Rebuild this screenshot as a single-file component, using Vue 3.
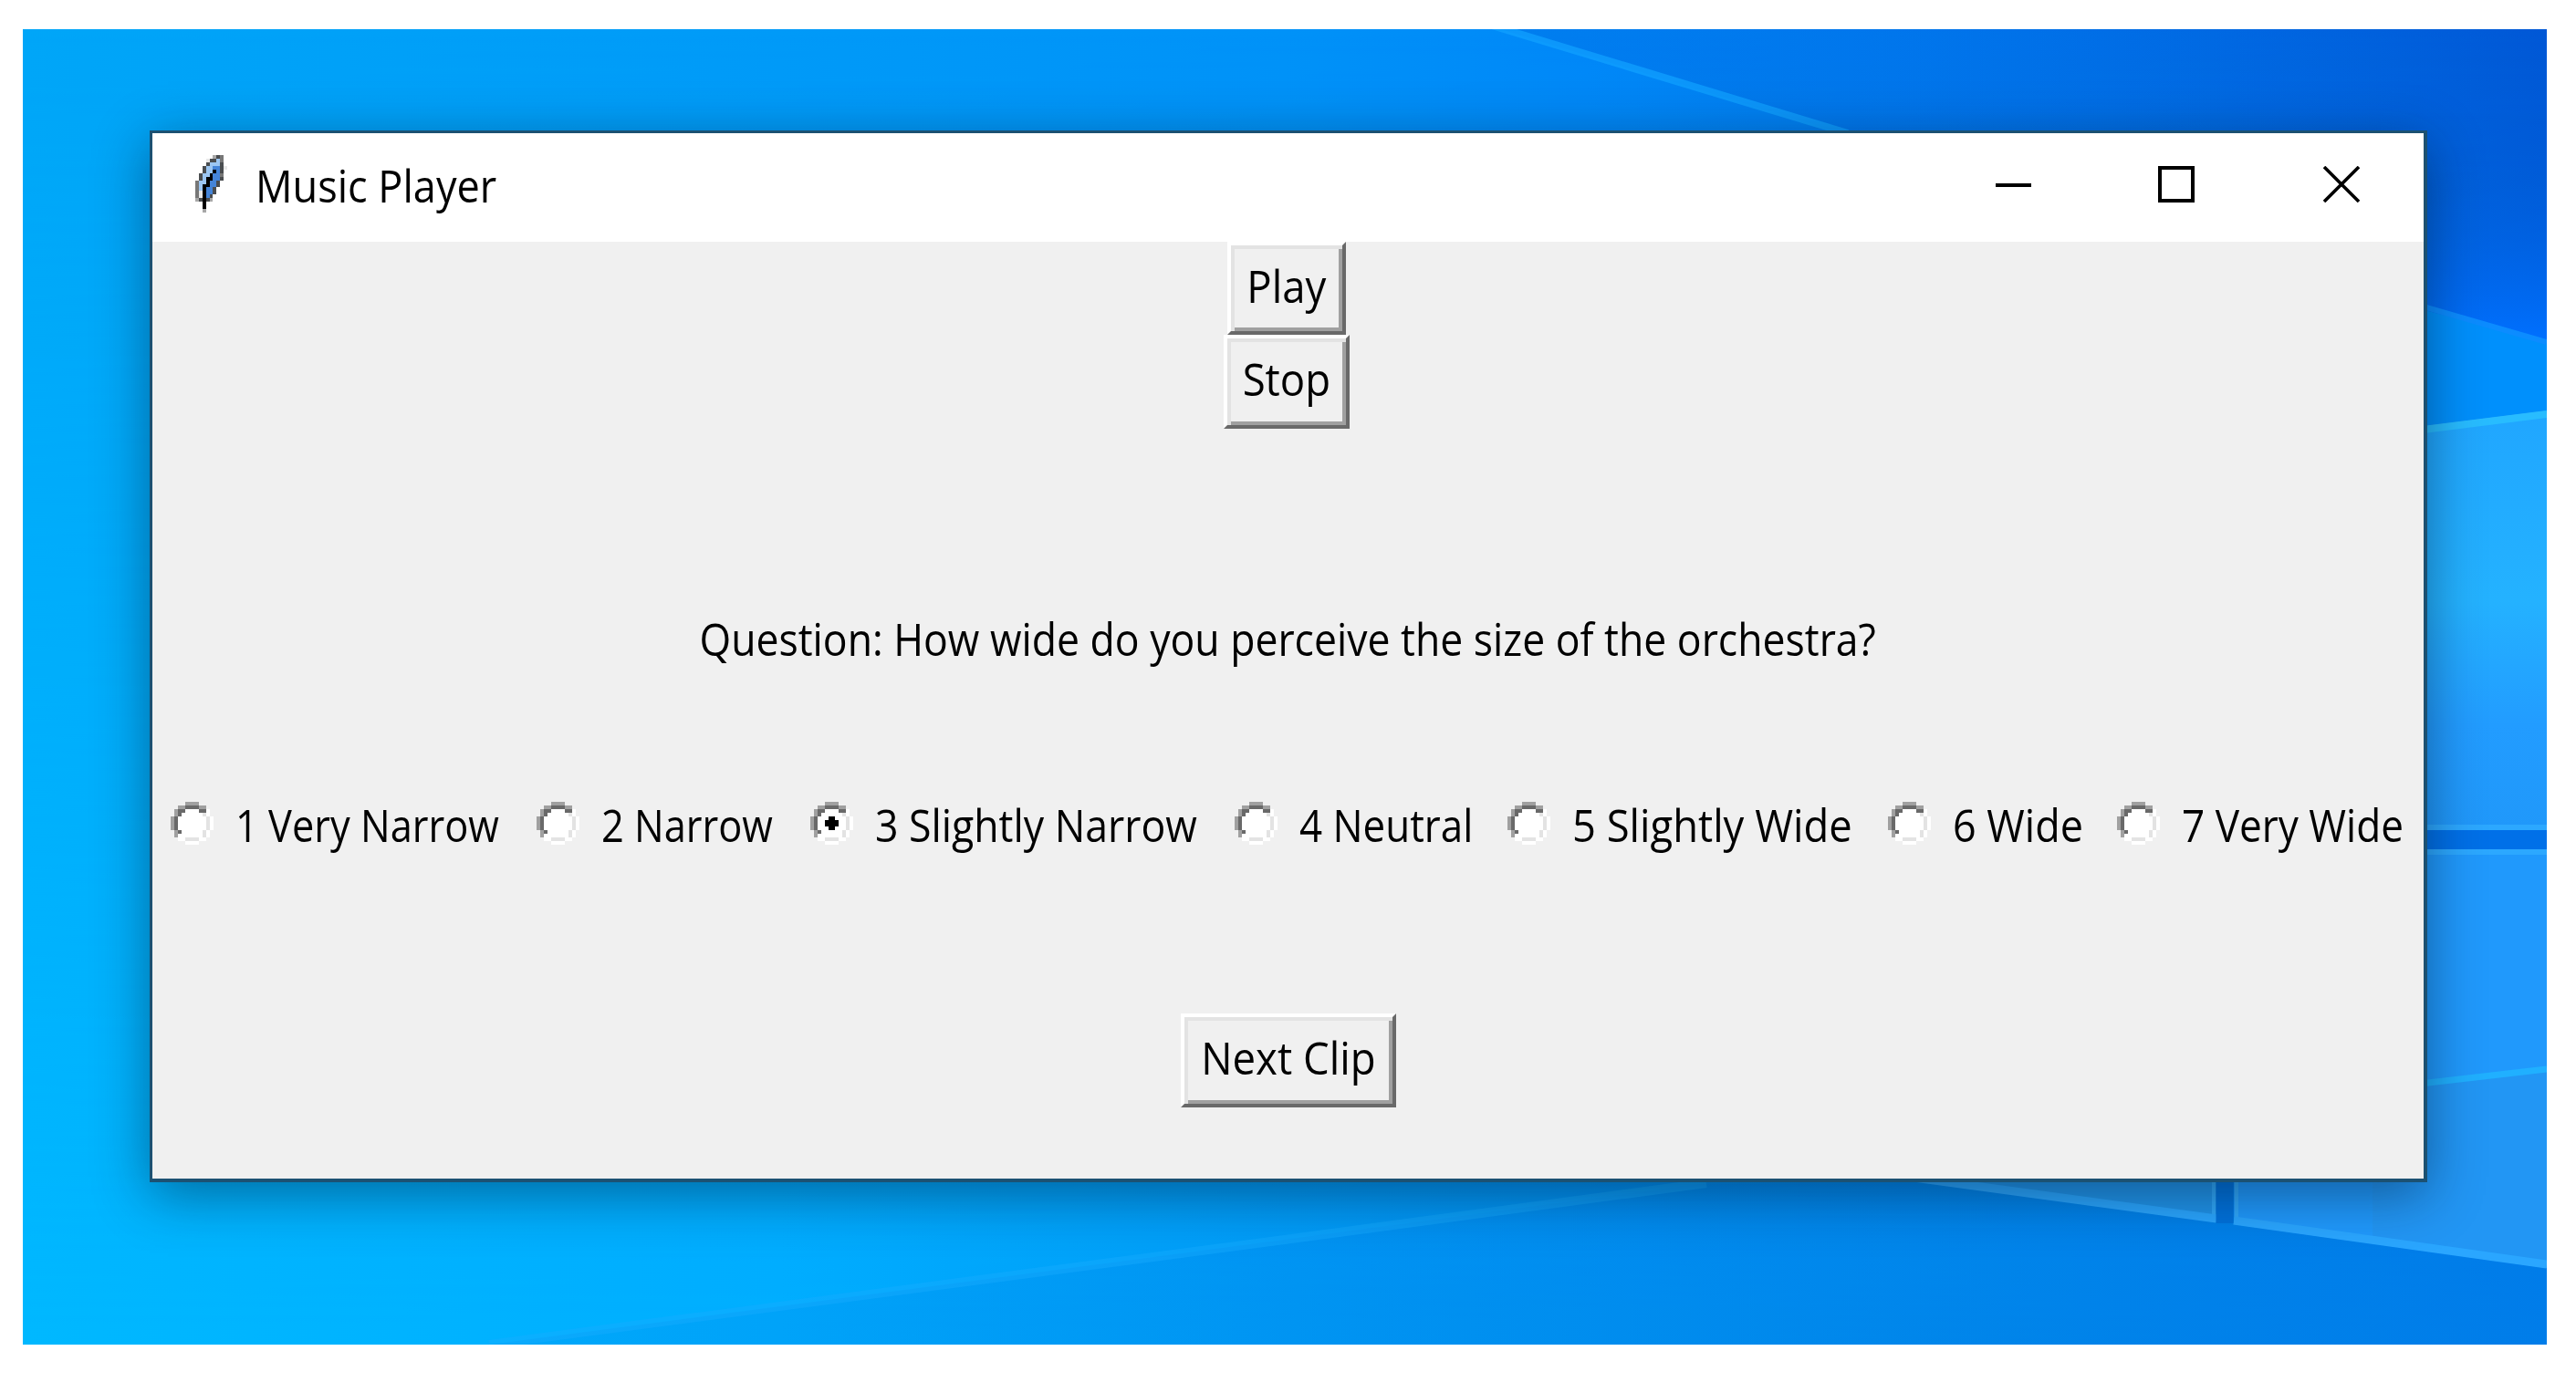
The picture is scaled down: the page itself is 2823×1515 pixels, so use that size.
<script setup>
import { ref } from 'vue'

const selected = ref(3)
const playing = ref(false)

const options = [
  { value: 1, label: '1 Very Narrow', width: 401, stretch: 0.885 },
  { value: 2, label: '2 Narrow', width: 300, stretch: 0.885 },
  { value: 3, label: '3 Slightly Narrow', width: 465, stretch: 0.91 },
  { value: 4, label: '4 Neutral', width: 299, stretch: 0.896 },
  { value: 5, label: '5 Slightly Wide', width: 417, stretch: 0.926 },
  { value: 6, label: '6 Wide', width: 251, stretch: 0.917 },
  { value: 7, label: '7 Very Wide', width: 330, stretch: 0.9 },
]

const featherColors = {
  k: '#000000',
  d: '#4a4d50',
  m: '#777777',
  g: '#a8a8a8',
  w: '#e8e8e8',
  l: '#9cc6f2',
  b: '#4484d8',
}

const feather = [
  '.....gdm.',
  '...wddlm.',
  '...dllld.',
  '..dllbbdw',
  '..dllkbd.',
  '.dllkbbm.',
  '.dlkkbbd.',
  'mllkbbd..',
  'mlkkbbd..',
  'mlkbbd...',
  'mwkbbd...',
  'mwkbd....',
  'gdkdg....',
  '..k......',
  '..k......',
  '..g......',
]

const pixels = feather.flatMap((row, y) =>
  [...row].map((c, x) => ({ x, y, fill: featherColors[c] })).filter((p) => p.fill)
)

// classic 12x12 radio bitmap
const radioColors = { g: '#a0a0a0', d: '#696969', w: '#ffffff', l: '#e3e3e3' }
const radio = [
  '....gggg....',
  '..ggddddgg..',
  '.gddwwwwddw.',
  '.gdwwwwwwlw.',
  'gdwwwwwwwwlw',
  'gdwwwwwwwwlw',
  'gdwwwwwwwwlw',
  'gdwwwwwwwwlw',
  '.gdwwwwwwlw.',
  '.gwwwwwwwlw.',
  '..wwllllww..',
  '....wwww....',
]
const radioPixels = radio.flatMap((row, y) =>
  [...row].map((c, x) => ({ x, y, fill: radioColors[c] })).filter((p) => p.fill)
)
</script>

<template>
  <div class="page">
    <div class="desktop">
      <svg class="wallpaper" viewBox="25 32 2766 1442" preserveAspectRatio="none">
        <defs>
          <linearGradient id="base" x1="0" y1="0" x2="1" y2="0">
            <stop offset="0" stop-color="#00a6f8" />
            <stop offset="0.5" stop-color="#0092f8" />
            <stop offset="0.62" stop-color="#0088f8" />
            <stop offset="0.75" stop-color="#007af0" />
            <stop offset="1" stop-color="#0058d6" />
          </linearGradient>
          <linearGradient id="low" x1="0" y1="0" x2="1" y2="0">
            <stop offset="0" stop-color="#00b8ff" />
            <stop offset="0.3" stop-color="#00aeff" />
            <stop offset="0.55" stop-color="#0098f4" />
            <stop offset="0.8" stop-color="#0084e8" />
            <stop offset="1" stop-color="#0078e8" />
          </linearGradient>
          <linearGradient id="down" x1="0" y1="0" x2="0" y2="1">
            <stop offset="0" stop-color="#000" />
            <stop offset="1" stop-color="#fff" />
          </linearGradient>
          <mask id="fade">
            <rect x="25" y="32" width="2766" height="1442" fill="url(#down)" />
          </mask>
          <linearGradient id="deep" x1="0" y1="0" x2="0" y2="1">
            <stop offset="0" stop-color="#0060e0" stop-opacity="0" />
            <stop offset="1" stop-color="#0070ff" />
          </linearGradient>
          <linearGradient id="pane" x1="0" y1="0" x2="0" y2="1">
            <stop offset="0" stop-color="#20a6ff" />
            <stop offset="0.45" stop-color="#24b2ff" />
            <stop offset="0.75" stop-color="#229cff" />
            <stop offset="1" stop-color="#2098fa" />
          </linearGradient>
          <linearGradient id="ray" x1="0" y1="0" x2="1" y2="0">
            <stop offset="0" stop-color="#0090ee" stop-opacity="0.3" />
            <stop offset="1" stop-color="#0080ea" stop-opacity="0.6" />
          </linearGradient>
          <linearGradient id="shade" x1="0" y1="0" x2="1" y2="0">
            <stop offset="0" stop-color="#0060d8" stop-opacity="0.3" />
            <stop offset="1" stop-color="#0060d8" stop-opacity="0" />
          </linearGradient>
        </defs>
        <rect x="25" y="32" width="2766" height="1442" fill="url(#base)" />
        <rect x="25" y="32" width="2766" height="1442" fill="url(#low)" mask="url(#fade)" />
        <polygon points="536,1474 1400,1360 1870,1297 2791,1297 2791,1474" fill="url(#ray)" />
        <path d="M536 1474L1400 1360L1870 1297" stroke="#18acff" stroke-opacity="0.4" stroke-width="10" fill="none" />
        <polygon points="1644,32 2791,32 2791,143 2010,143" fill="url(#shade)" />
        <path d="M1635 28L2025 146" stroke="#10a0ff" stroke-opacity="0.75" stroke-width="8" />
        <rect x="2560" y="180" width="231" height="195" fill="url(#deep)" />
        <polygon points="2600,325 2791,375 2791,450 2600,474" fill="#0090fc" />
        <path d="M2600 320L2791 375" stroke="#0c8cff" stroke-width="6" />
        <polygon points="2600,474 2791,450 2791,910 2600,910" fill="url(#pane)" />
        <path d="M2600 478L2791 454" stroke="#28bcff" stroke-width="8" />
        <path d="M2600 907H2791" stroke="#2ca8ff" stroke-width="6" />
        <rect x="2600" y="910" width="191" height="21" fill="#0070e8" />
        <polygon points="2448,931 2791,931 2791,1390 2448,1342" fill="#2099fc" />
        <path d="M2600 934H2791" stroke="#2ca8ff" stroke-width="6" />
        <polygon points="2600,1196 2791,1172 2791,1390 2600,1362" fill="#2296f4" />
        <path d="M2600 1194L2791 1172" stroke="#20b0ff" stroke-width="7" />
        <polygon points="2090,1290 2429,1290 2429,1340" fill="#2094ea" />
        <path d="M2426 1290V1338M2451 1290V1340" stroke="#30a8fa" stroke-width="4" />
        <path d="M2090 1290L2429 1336M2448 1338L2791 1386" stroke="#2aa6ff" stroke-width="9" />
        <path d="M2438 1290V1341" stroke="#0072dc" stroke-width="19" />
      </svg>

      <div class="window">
        <header class="titlebar">
          <svg class="feather" viewBox="0 0 9 16" preserveAspectRatio="none" shape-rendering="crispEdges">
            <rect v-for="p in pixels" :key="p.x + '-' + p.y" :x="p.x" :y="p.y" width="1" height="1" :fill="p.fill" />
          </svg>
          <span class="title">Music Player</span>
          <svg class="controls" viewBox="0 0 400 40">
            <rect x="0" y="19" width="39" height="4" />
            <rect x="180" y="2" width="36" height="36" fill="none" stroke="#000" stroke-width="4" />
            <path d="M360 1L398 39M398 1L360 39" stroke="#000" stroke-width="3.6" />
          </svg>
        </header>

        <main class="content">
          <button class="btn play" @click="playing = true"><span>Play</span></button>
          <button class="btn stop" @click="playing = false"><span>Stop</span></button>
          <p class="question">Question: How wide do you perceive the size of the orchestra?</p>
          <div class="options">
            <div
              v-for="o in options"
              :key="o.value"
              class="option"
              :style="{ width: o.width + 'px' }"
              @click="selected = o.value"
            >
              <svg class="radio" viewBox="0 0 12 12" shape-rendering="crispEdges">
                <rect v-for="p in radioPixels" :key="p.x + '-' + p.y" :x="p.x" :y="p.y" width="1" height="1" :fill="p.fill" />
                <path v-if="selected === o.value" d="M5 4h2v1h1v2h-1v1h-2v-1h-1v-2h1z" />
              </svg>
              <span class="label" :style="{ transform: `scaleX(${o.stretch})` }">{{ o.label }}</span>
            </div>
          </div>
          <button class="btn next"><span>Next Clip</span></button>
        </main>
      </div>
    </div>
  </div>
</template>

<style>
body {
  margin: 0;
  background: #fff;
}
</style>

<style scoped>
.page {
  box-sizing: border-box;
  width: 2823px;
  height: 1515px;
  padding: 32px 32px 41px 25px;
  background: #fff;
  font-family: 'Open Sans', 'Noto Sans', sans-serif;
  font-size: 49px;
  line-height: 60px;
  color: #000;
}
.desktop {
  position: relative;
  box-sizing: border-box;
  height: 1442px;
  padding: 111px 131px 178px 139px;
  overflow: hidden;
}
.wallpaper {
  position: absolute;
  inset: 0;
  width: 100%;
  height: 100%;
}
.window {
  position: relative;
  box-sizing: border-box;
  width: 2496px;
  height: 1153px;
  border: 3px solid #1c5172;
  border-width: 3px 4px 4px 3px;
  background: #f0f0f0;
  box-shadow: 0 14px 56px rgba(0, 20, 40, 0.45);
}
.titlebar {
  display: flex;
  align-items: flex-start;
  height: 119px;
  background: #fff;
}
.feather {
  width: 35px;
  height: 63px;
  margin: 24px 0 0 47px;
}
.title {
  flex: 1;
  margin: 27px 0 0 31px;
  white-space: nowrap;
  transform: scaleX(0.92);
  transform-origin: left;
}
.controls {
  width: 400px;
  height: 40px;
  margin: 36px 69px 0 0;
}
.content {
  display: flex;
  flex-direction: column;
  align-items: center;
}
.btn {
  display: flex;
  justify-content: center;
  box-sizing: border-box;
  height: 103px;
  padding: 14px 0 0;
  border: 4px solid;
  border-color: #fff #696969 #696969 #fff;
  box-shadow: inset 4px 4px 0 #e3e3e3, inset -4px -4px 0 #a0a0a0;
  background: #f0f0f0;
  font: inherit;
  color: inherit;
  white-space: nowrap;
}
.btn span {
  display: block;
  transform: scaleX(0.93);
}
.play {
  width: 130px;
  height: 102px;
  margin-right: 3px;
}
.stop {
  width: 138px;
  margin-right: 3px;
}
.question {
  margin: 200px 0 0;
  white-space: nowrap;
  transform: scaleX(0.909);
}
.options {
  display: flex;
  align-self: stretch;
  margin-top: 144px;
  padding-left: 20px;
}
.option {
  display: flex;
  flex: none;
  align-items: flex-start;
}
.radio {
  flex: none;
  width: 47px;
  height: 47px;
  margin: 5px 24px 0 0;
}
.label {
  white-space: nowrap;
  transform-origin: left;
}
.next {
  width: 236px;
  margin-top: 177px;
}
</style>
